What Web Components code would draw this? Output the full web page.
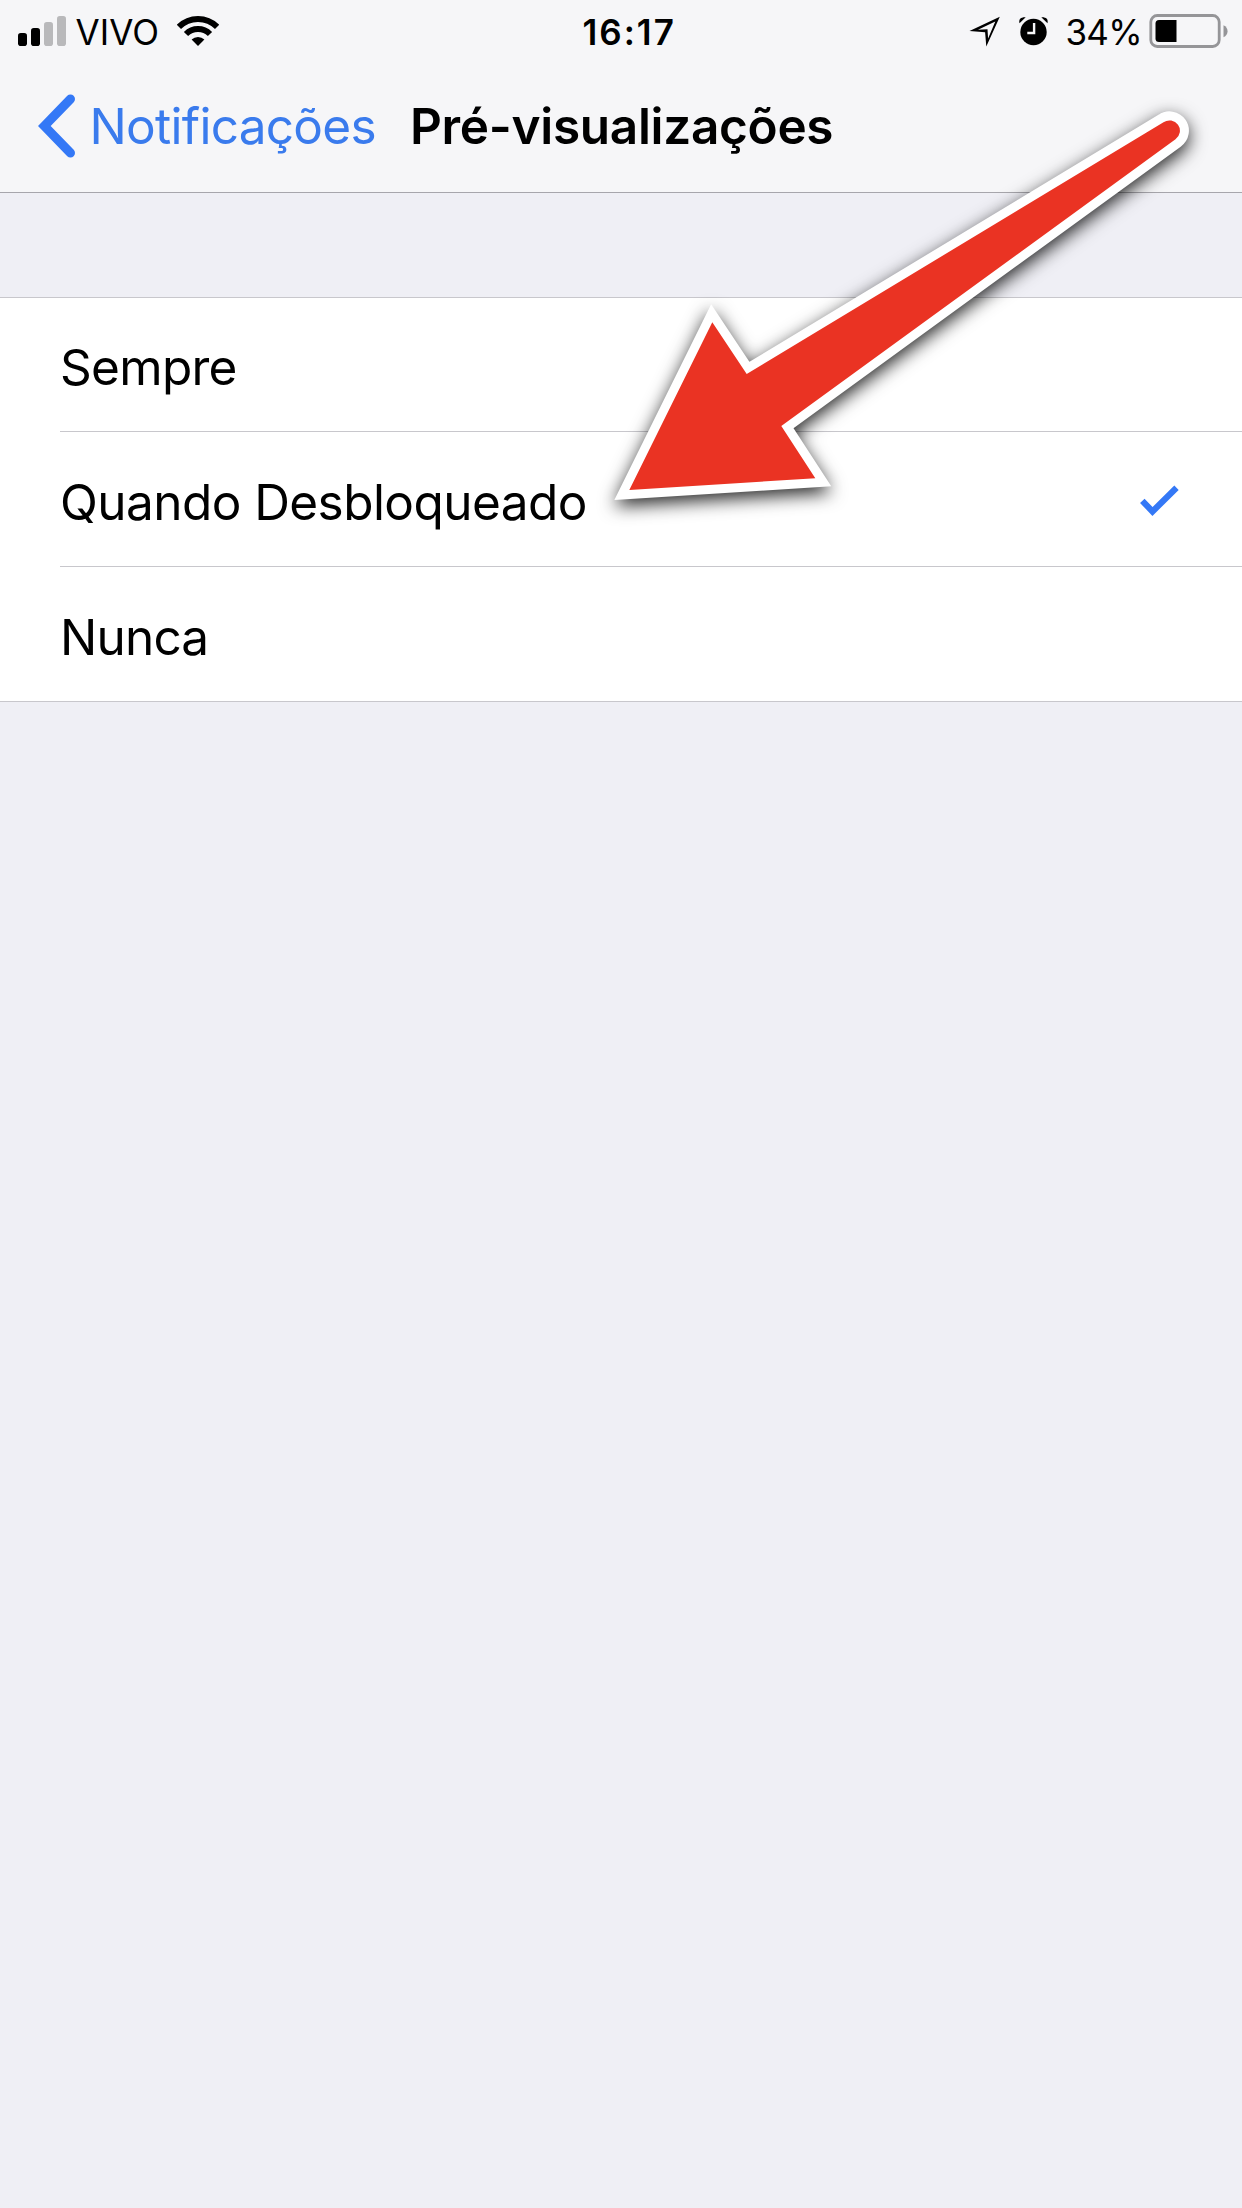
<!DOCTYPE html>
<html lang="pt-BR">
<head>
<meta charset="utf-8">
<title>Pré-visualizações</title>
<style>
body{
    margin: 0;
    background: #efeff5;
    font-family: Inter, "Liberation Sans", sans-serif;
    color: #000;
}
</style>
</head>
<body>

<phone-screen>
    <status-bar slot="header" carrier="VIVO" time="16:17" battery="34%"></status-bar>
    <nav-bar slot="header" back="Notificações">Pré-visualizações</nav-bar>
    <option-list>
        <option-row style="--spacing: -0.7px">Sempre</option-row>
        <option-row checked>Quando Desbloqueado</option-row>
        <option-row style="--spacing: -0.8px">Nunca</option-row>
    </option-list>
    <arrow-pointer slot="overlay"></arrow-pointer>
</phone-screen>

<script>
class PhoneScreen extends HTMLElement {
    constructor() {
        super();
        this.attachShadow({mode:'open'});
        this.shadowRoot.innerHTML = `
<style>
:host{
    display: block;
    position: relative;
    width: 1242px;
    height: 2208px;
    overflow: hidden;
    background: #efeff5;
}
header{
    height: 192px;
    background: #f6f6f8;
    border-bottom: 1px solid #a7a6ac;
}
main{
    padding-top: 104px;
}
</style>
<header><slot name="header"></slot></header>
<main><slot></slot></main>
<slot name="overlay"></slot>
`;
    }
}

class StatusBar extends HTMLElement {
    constructor() {
        super();
        this.attachShadow({mode:'open'});
        this.shadowRoot.innerHTML = `
<style>
:host{
    display: grid;
    grid-template-columns: 564.5px 1fr auto;
    align-items: center;
    box-sizing: border-box;
    height: 60px;
    padding: 0 14.5px 0 18px;
    font-size: 35px;
    line-height: 60px;
}
div{
    display: flex;
    align-items: center;
    height: 60px;
}
span{
    padding-top: 2px;
    white-space: nowrap;
}
svg{
    display: block;
    flex: none;
}
.carrier{
    width: 101.5px;
    margin-left: 9.5px;
    letter-spacing: 0.1px;
}
.time{
    font-weight: 600;
    letter-spacing: 2px;
}
.battery{
    width: 83px;
    letter-spacing: -0.8px;
}
</style>
<div>
    <svg width="48" height="60" viewBox="0 0 48 60">
        <rect x="0" y="32" width="9" height="13" rx="2.8"/>
        <rect x="13" y="27" width="9" height="18" rx="2.8"/>
        <rect x="26" y="21" width="9" height="24" rx="2.8" fill="#b9b9bb"/>
        <rect x="39" y="15" width="9" height="30" rx="2.8" fill="#b9b9bb"/>
    </svg>
    <span class="carrier"></span>
    <svg width="42" height="60" viewBox="177 0 42 60">
        <path d="M178.9 25.9A27 27 0 0 1 217.1 25.9M186 33A17 17 0 0 1 210 33" fill="none" stroke="#000" stroke-width="6"/>
        <path d="M198 45L191.6 38.6A9 9 0 0 1 204.4 38.6Z"/>
    </svg>
</div>
<span class="time"></span>
<div>
    <svg width="97" height="60" viewBox="968.5 0 97 60">
        <path fill-rule="evenodd" d="M969 30L999.3 15.7L985.8 45.5L984.6 31.2ZM977.5 28.7L987 28.3L987.6 37.5L994.8 20.4Z"/>
        <circle cx="1033" cy="31" r="13.2"/>
        <path d="M1019 22.3C1018 18 1020.5 16 1025.2 16.3ZM1047 22.3C1048 18 1045.5 16 1040.8 16.3Z"/>
        <path d="M1033.6 22V32H1026.8" fill="none" stroke="#f6f6f8" stroke-width="2.4"/>
    </svg>
    <span class="battery"></span>
    <svg width="79" height="60" viewBox="1148.5 0 79 60">
        <rect x="1150.3" y="14.5" width="68.4" height="31" rx="6.5" fill="none" stroke="#959598" stroke-width="2.8"/>
        <path d="M1176 19V41H1158.5Q1155 41 1155 37.5V22.5Q1155 19 1158.5 19Z"/>
        <path d="M1223 24.2Q1227 26 1227 30.2T1223 36.2Z" fill="#959598"/>
    </svg>
</div>
`;
    }

    static get observedAttributes(){
        return ['carrier','time','battery'];
    }

    attributeChangedCallback(name,oldValue,newValue){
        this.shadowRoot.querySelector('.'+name).textContent=newValue;
    }
}

class NavBar extends HTMLElement {
    constructor() {
        super();
        this.attachShadow({mode:'open'});
        this.shadowRoot.innerHTML = `
<style>
:host{
    display: flex;
    align-items: center;
    box-sizing: border-box;
    height: 132px;
    padding-left: 38px;
    font-size: 49.5px;
    line-height: 60px;
    white-space: nowrap;
}
svg{
    display: block;
    flex: none;
    margin-right: 13.5px;
}
.back{
    width: 320.5px;
    color: #3a7bed;
    letter-spacing: -0.72px;
}
.title{
    font-weight: 600;
    letter-spacing: -0.31px;
}
</style>
<svg width="38" height="66" viewBox="0 0 38 66">
    <path d="M32.5 6L6.3 33L32.5 60" fill="none" stroke="#3478f6" stroke-width="9" stroke-linecap="round"/>
</svg>
<span class="back"></span>
<span class="title"><slot></slot></span>
`;
    }

    static get observedAttributes(){
        return ['back'];
    }

    attributeChangedCallback(name,oldValue,newValue){
        this.shadowRoot.querySelector('.back').textContent=newValue;
    }
}

class OptionList extends HTMLElement {
    constructor() {
        super();
        this.attachShadow({mode:'open'});
        this.shadowRoot.innerHTML = `
<style>
:host{
    display: block;
    background: #fff;
    border-top: 1px solid #c8c7cc;
    border-bottom: 1px solid #c8c7cc;
}
::slotted(:first-child){
    height: 133px;
}
::slotted(:not(:first-child)){
    --line: #c8c7cc;
    --shift: 6px;
}
</style>
<slot></slot>
`;
    }
}

class OptionRow extends HTMLElement {
    constructor() {
        super();
        this.attachShadow({mode:'open'});
        this.shadowRoot.innerHTML = `
<style>
:host{
    display: flex;
    height: 135px;
    box-sizing: border-box;
    padding-left: 60px;
    font-size: 49.5px;
    letter-spacing: var(--spacing, -0.56px);
}
div{
    flex: 1;
    display: flex;
    align-items: center;
    justify-content: space-between;
    padding-right: 63px;
    border-top: 1px solid var(--line, #fff);
}
span{
    padding-top: var(--shift, 3px);
}
svg{
    display: none;
    margin-top: 4px;
}
:host([checked]) svg{
    display: block;
}
</style>
<div>
    <span><slot></slot></span>
    <svg width="39" height="32" viewBox="1140 485 39 32">
        <path d="M1142.3 500.8L1152.5 511.5L1176.5 487.8" fill="none" stroke="#3478f6" stroke-width="6.2"/>
    </svg>
</div>
`;
    }
}

class ArrowPointer extends HTMLElement {
    constructor() {
        super();
        this.attachShadow({mode:'open'});
        this.shadowRoot.innerHTML = `
<style>
:host{
    position: absolute;
    top: 0;
    left: 0;
    pointer-events: none;
}
svg{
    display: block;
}
path{
    fill: #ea3323;
    stroke: #fff;
    stroke-width: 18px;
    stroke-miterlimit: 8;
    paint-order: stroke;
    filter: drop-shadow(0 6px 9px rgba(0,0,0,0.85));
}
</style>
<svg width="1242" height="560" viewBox="0 0 1242 560">
    <path d="M629.3 490L712.3 322.3L746.7 374L1163.5 122.3A10.3 10.3 0 0 1 1175.5 139.3L781.3 426L815.3 478.2Z"/>
</svg>
`;
    }
}

customElements.define('phone-screen', PhoneScreen);
customElements.define('status-bar', StatusBar);
customElements.define('nav-bar', NavBar);
customElements.define('option-list', OptionList);
customElements.define('option-row', OptionRow);
customElements.define('arrow-pointer', ArrowPointer);
</script>
</body>
</html>
